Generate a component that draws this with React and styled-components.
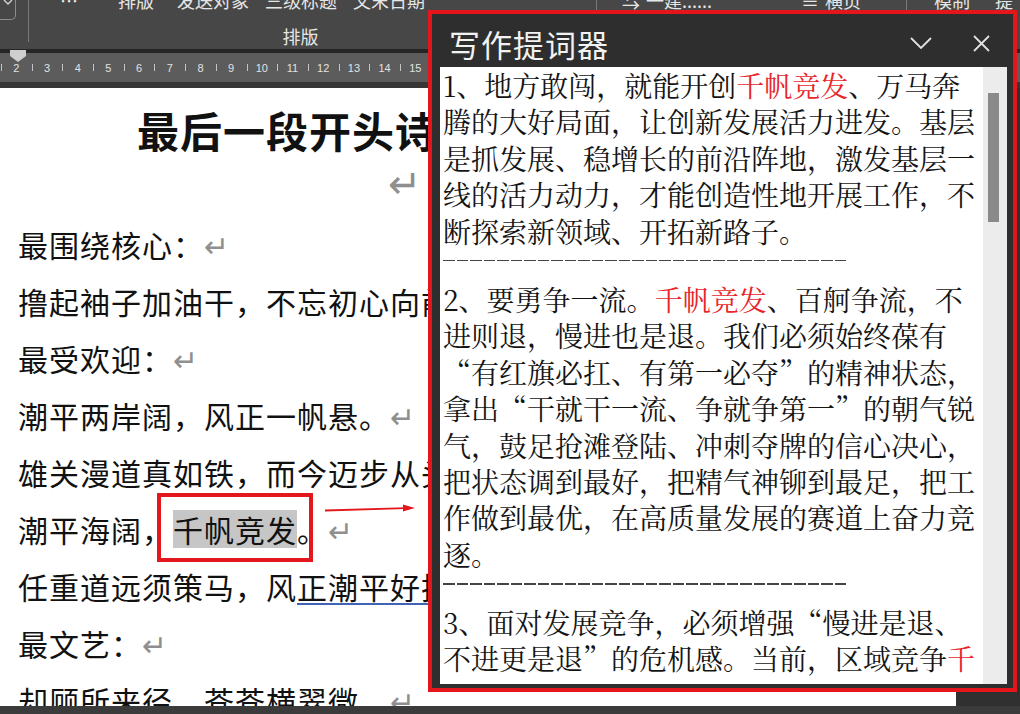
import React from "react";
import styled, { createGlobalStyle } from "styled-components";

const SANS = `"Noto Sans CJK SC", "Noto Sans", sans-serif`;
const SERIF = `"Noto Serif CJK SC", "Noto Sans CJK SC", serif`;

const GlobalStyle = createGlobalStyle`
  html, body { margin: 0; padding: 0; background: #3a3a3a; overflow: hidden; }
  #root { width: 1020px; height: 714px; }
`;

const Window = styled.div`
  position: relative;
  width: 1020px;
  height: 714px;
  overflow: hidden;
  display: flex;
  flex-direction: column;
  background: #3a3a3a;
  font-family: ${SANS};
`;

/* ---------- ribbon ---------- */
const Ribbon = styled.div`
  height: 49px;
  flex: none;
  background: #474747;
  display: flex;
  align-items: flex-start;
  color: #e6e6e6;
  overflow: hidden;
`;

const LauncherBox = styled.div`
  width: 15px;
  height: 19px;
  flex: none;
  border-right: 1px solid #8c8c8c;
  border-bottom: 1px solid #8c8c8c;
  border-bottom-right-radius: 5px;
  display: flex;
  justify-content: center;
  align-items: flex-start;
`;

const GroupSep = styled.div`
  width: 1px;
  height: 42px;
  flex: none;
  background: #7a7a7a;
  margin-left: ${(p) => p.$ml || 0}px;
`;

const Group = styled.div`
  width: ${(p) => p.$w}px;
  flex: none;
  display: flex;
  flex-direction: column;
`;

const TopRow = styled.div`
  height: 22px;
  display: flex;
  align-items: flex-start;
`;

const TopSlot = styled.span`
  width: ${(p) => p.$w}px;
  flex: none;
  margin-top: -10px;
  font-size: 18px;
  line-height: 20px;
  white-space: nowrap;
  overflow: hidden;
`;

const GroupLabel = styled.div`
  height: 27px;
  display: flex;
  align-items: center;
  justify-content: center;
  padding-right: ${(p) => p.$pr || 0}px;
  font-size: 18px;
`;

/* ---------- ruler ---------- */
const RulerEdge = styled.div`
  height: ${(p) => p.$h}px;
  flex: none;
  background: ${(p) => p.$bg};
`;

const Ruler = styled.div`
  height: 29px;
  flex: none;
  background: #5c5c5c;
  display: flex;
  padding-left: 1px;
  overflow: hidden;
`;

const RulerCell = styled.div`
  position: relative;
  width: 30.7px;
  flex: none;
  display: flex;
  align-items: center;
  justify-content: center;
  font: 11px "Liberation Sans", sans-serif;
  color: #e2e2e2;
  &::before {
    content: "";
    position: absolute;
    left: 0;
    top: 11px;
    width: 1px;
    height: 7px;
    background: #c4c4c4;
  }
`;

const IndentMarker = styled.svg`
  position: absolute;
  left: 10px;
  top: 50px;
`;

/* ---------- document ---------- */
const DocArea = styled.div`
  flex: 1;
  display: flex;
  min-height: 0;
  background: #303030;
`;

const Page = styled.div`
  width: 956px;
  flex: none;
  box-sizing: border-box;
  background: #ffffff;
  padding: 14px 0 0 18px;
  overflow: hidden;
  color: #111;
`;

const Title = styled.div`
  padding-left: 119px;
  font-size: 42px;
  font-weight: 700;
  letter-spacing: 1px;
  line-height: 56px;
  white-space: nowrap;
`;

const CenterMark = styled.div`
  padding-left: 370px;
  height: 52px;
  line-height: 52px;
  margin-bottom: 6px;
`;

const Mark = styled.span`
  font-family: "DejaVu Sans", sans-serif;
  font-size: ${(p) => p.$size || 30}px;
  color: #8f8f8f;
  letter-spacing: 0;
`;

const BodyLine = styled.div`
  height: 57px;
  line-height: 57px;
  font-size: 30px;
  letter-spacing: 1px;
  white-space: nowrap;
`;

const Highlight = styled.span`
  display: inline-block;
  height: 38px;
  line-height: 38px;
  background: #c6c6c6;
`;

const Squiggle = styled.span`
  text-decoration: underline;
  text-decoration-color: #4163b3;
  text-decoration-thickness: 1.5px;
  text-underline-offset: 4px;
`;

const StatusBar = styled.div`
  height: 8px;
  flex: none;
  background: #3b3b3b;
`;

/* ---------- annotations ---------- */
const RedBox = styled.div`
  position: absolute;
  left: 157px;
  top: 493px;
  width: 156px;
  height: 69px;
  box-sizing: border-box;
  border: 4px solid #e2181c;
`;

const Arrow = styled.svg`
  position: absolute;
  left: 322px;
  top: 501px;
`;

/* ---------- floating panel ---------- */
const Panel = styled.section`
  position: absolute;
  left: 428px;
  top: 10px;
  width: 589px;
  height: 682px;
  box-sizing: border-box;
  border: 4px solid #e5151c;
  background: #2e2e2e;
  display: flex;
  flex-direction: column;
  padding: 0 6px 4px 8px;
`;

const PanelHeader = styled.header`
  height: 53px;
  flex: none;
  box-sizing: border-box;
  display: flex;
  align-items: center;
  padding: 5px 14px 0 9px;
  color: #f2f2f2;
`;

const PanelTitle = styled.h1`
  flex: 1;
  margin: 0;
  font-family: ${SANS};
  font-weight: 400;
  font-size: 31px;
  letter-spacing: 1px;
  line-height: 1;
`;

const IconButton = styled.button`
  width: 24px;
  height: 24px;
  padding: 0;
  margin-left: ${(p) => p.$ml || 0}px;
  border: 0;
  background: transparent;
  color: #e2e2e2;
  display: flex;
  align-items: center;
  justify-content: center;
`;

const PanelBody = styled.div`
  flex: 1;
  min-height: 0;
  display: flex;
  background: #ffffff;
  overflow: hidden;
`;

const TextPane = styled.div`
  flex: 1;
  padding: 0 0 0 3px;
  overflow: hidden;
  font-family: ${SERIF};
  font-size: 28px;
  color: #141414;
`;

const PanelLine = styled.div`
  height: 36.4px;
  line-height: 36.4px;
  white-space: nowrap;
`;

const Red = styled.span`
  color: #e8262b;
`;

const DashRow = styled.div`
  height: 32px;
  box-sizing: border-box;
  padding-top: 11px;
`;

const Dashes = styled.div`
  width: 405px;
  height: 1.5px;
  background: repeating-linear-gradient(
    90deg,
    #444 0 11.5px,
    transparent 11.5px 13.5px
  );
`;

const ScrollTrack = styled.div`
  width: 24px;
  flex: none;
  box-sizing: border-box;
  background: #ececec;
  padding: 26px 0 0 5px;
`;

const ScrollThumb = styled.div`
  width: 11px;
  height: 129px;
  background: #8a8a8a;
`;

const rulerNumbers = Array.from({ length: 34 }, (_, i) => i + 2);

const para1 = [
  [<span key="a">1、地方敢闯，就能开创</span>, <Red key="b">千帆竞发</Red>, <span key="c">、万马奔</span>],
  ["腾的大好局面，让创新发展活力进发。基层"],
  ["是抓发展、稳增长的前沿阵地，激发基层一"],
  ["线的活力动力，才能创造性地开展工作，不"],
  ["断探索新领域、开拓新路子。"],
];

const para2 = [
  [<span key="a">2、要勇争一流。</span>, <Red key="b">千帆竞发</Red>, <span key="c">、百舸争流，不</span>],
  ["进则退，慢进也是退。我们必须始终葆有"],
  ["“有红旗必扛、有第一必夺”的精神状态，"],
  ["拿出“干就干一流、争就争第一”的朝气锐"],
  ["气，鼓足抢滩登陆、冲刺夺牌的信心决心，"],
  ["把状态调到最好，把精气神铆到最足，把工"],
  ["作做到最优，在高质量发展的赛道上奋力竞"],
  ["逐。"],
];

const para3 = [
  ["3、面对发展竞争，必须增强“慢进是退、"],
  [<span key="a">不进更是退”的危机感。当前，区域竞争</span>, <Red key="b">千</Red>],
];

const Paragraph = ({ lines }) => (
  <div>
    {lines.map((l, i) => (
      <PanelLine key={i}>{l}</PanelLine>
    ))}
  </div>
);

export default function App() {
  return (
    <>
      <GlobalStyle />
      <Window lang="zh-CN">
        <Ribbon>
          <LauncherBox>
            <svg width="10" height="6" viewBox="0 0 10 6">
              <polyline points="1,0 5,4 9,0" fill="none" stroke="#d0d0d0" strokeWidth="1.4" />
            </svg>
          </LauncherBox>
          <GroupSep $ml={12} />
          <Group $w={567}>
            <TopRow>
              <TopSlot $w={31} />
              <TopSlot $w={58}>⋯</TopSlot>
              <TopSlot $w={59}>排版</TopSlot>
              <TopSlot $w={88}>发送对象</TopSlot>
              <TopSlot $w={88}>三级标题</TopSlot>
              <TopSlot $w={100}>文末日期</TopSlot>
            </TopRow>
            <GroupLabel $pr={24}>排版</GroupLabel>
          </Group>
          <GroupSep />
          <Group $w={309}>
            <TopRow>
              <TopSlot $w={25} />
              <TopSlot $w={24}>⇆</TopSlot>
              <TopSlot $w={155}>一建......</TopSlot>
              <TopSlot $w={24}>≡</TopSlot>
              <TopSlot $w={81}>横页</TopSlot>
            </TopRow>
          </Group>
          <GroupSep />
          <Group $w={120}>
            <TopRow>
              <TopSlot $w={27} />
              <TopSlot $w={61}>模制</TopSlot>
              <TopSlot $w={30}>提</TopSlot>
            </TopRow>
          </Group>
        </Ribbon>

        <RulerEdge $h={4} $bg="#262626" />
        <Ruler>
          {rulerNumbers.map((n) => (
            <RulerCell key={n}>{n}</RulerCell>
          ))}
        </Ruler>
        <RulerEdge $h={6} $bg="#363636" />

        <DocArea>
          <Page>
            <Title>最后一段开头诗句</Title>
            <CenterMark>
              <Mark $size={40}>↵</Mark>
            </CenterMark>
            <BodyLine>
              最围绕核心：<Mark>↵</Mark>
            </BodyLine>
            <BodyLine>撸起袖子加油干，不忘初心向前进</BodyLine>
            <BodyLine>
              最受欢迎：<Mark>↵</Mark>
            </BodyLine>
            <BodyLine>
              潮平两岸阔，风正一帆悬。<Mark>↵</Mark>
            </BodyLine>
            <BodyLine>雄关漫道真如铁，而今迈步从头越</BodyLine>
            <BodyLine>
              潮平海阔，<Highlight>千帆竞发</Highlight>。<Mark>↵</Mark>
            </BodyLine>
            <BodyLine>
              任重道远须策马，风<Squiggle>正潮平好扬</Squiggle>帆
            </BodyLine>
            <BodyLine>
              最文艺：<Mark>↵</Mark>
            </BodyLine>
            <BodyLine>
              却顾所来径，苍苍横翠微。<Mark>↵</Mark>
            </BodyLine>
          </Page>
        </DocArea>
        <StatusBar />

        <IndentMarker width="16" height="12" viewBox="0 0 16 12">
          <polygon points="0,0 16,0 16,6 8,12 0,6" fill="#cfcfcf" />
        </IndentMarker>

        <RedBox />
        <Arrow width="96" height="14" viewBox="0 0 96 14">
          <line x1="3" y1="9.5" x2="84" y2="7.2" stroke="#e2181c" strokeWidth="1.8" />
          <polygon points="81,3.5 93,7 81,10.5" fill="#e2181c" />
        </Arrow>

        <Panel>
          <PanelHeader>
            <PanelTitle>写作提词器</PanelTitle>
            <IconButton aria-label="收起">
              <svg width="22" height="12" viewBox="0 0 22 12">
                <polyline points="1,1 11,11 21,1" fill="none" stroke="currentColor" strokeWidth="1.8" />
              </svg>
            </IconButton>
            <IconButton $ml={36} aria-label="关闭">
              <svg width="17" height="17" viewBox="0 0 17 17">
                <line x1="1" y1="1" x2="16" y2="16" stroke="currentColor" strokeWidth="1.8" />
                <line x1="16" y1="1" x2="1" y2="16" stroke="currentColor" strokeWidth="1.8" />
              </svg>
            </IconButton>
          </PanelHeader>
          <PanelBody>
            <TextPane>
              <Paragraph lines={para1} />
              <DashRow>
                <Dashes />
              </DashRow>
              <Paragraph lines={para2} />
              <DashRow>
                <Dashes />
              </DashRow>
              <Paragraph lines={para3} />
            </TextPane>
            <ScrollTrack>
              <ScrollThumb />
            </ScrollTrack>
          </PanelBody>
        </Panel>
      </Window>
    </>
  );
}
